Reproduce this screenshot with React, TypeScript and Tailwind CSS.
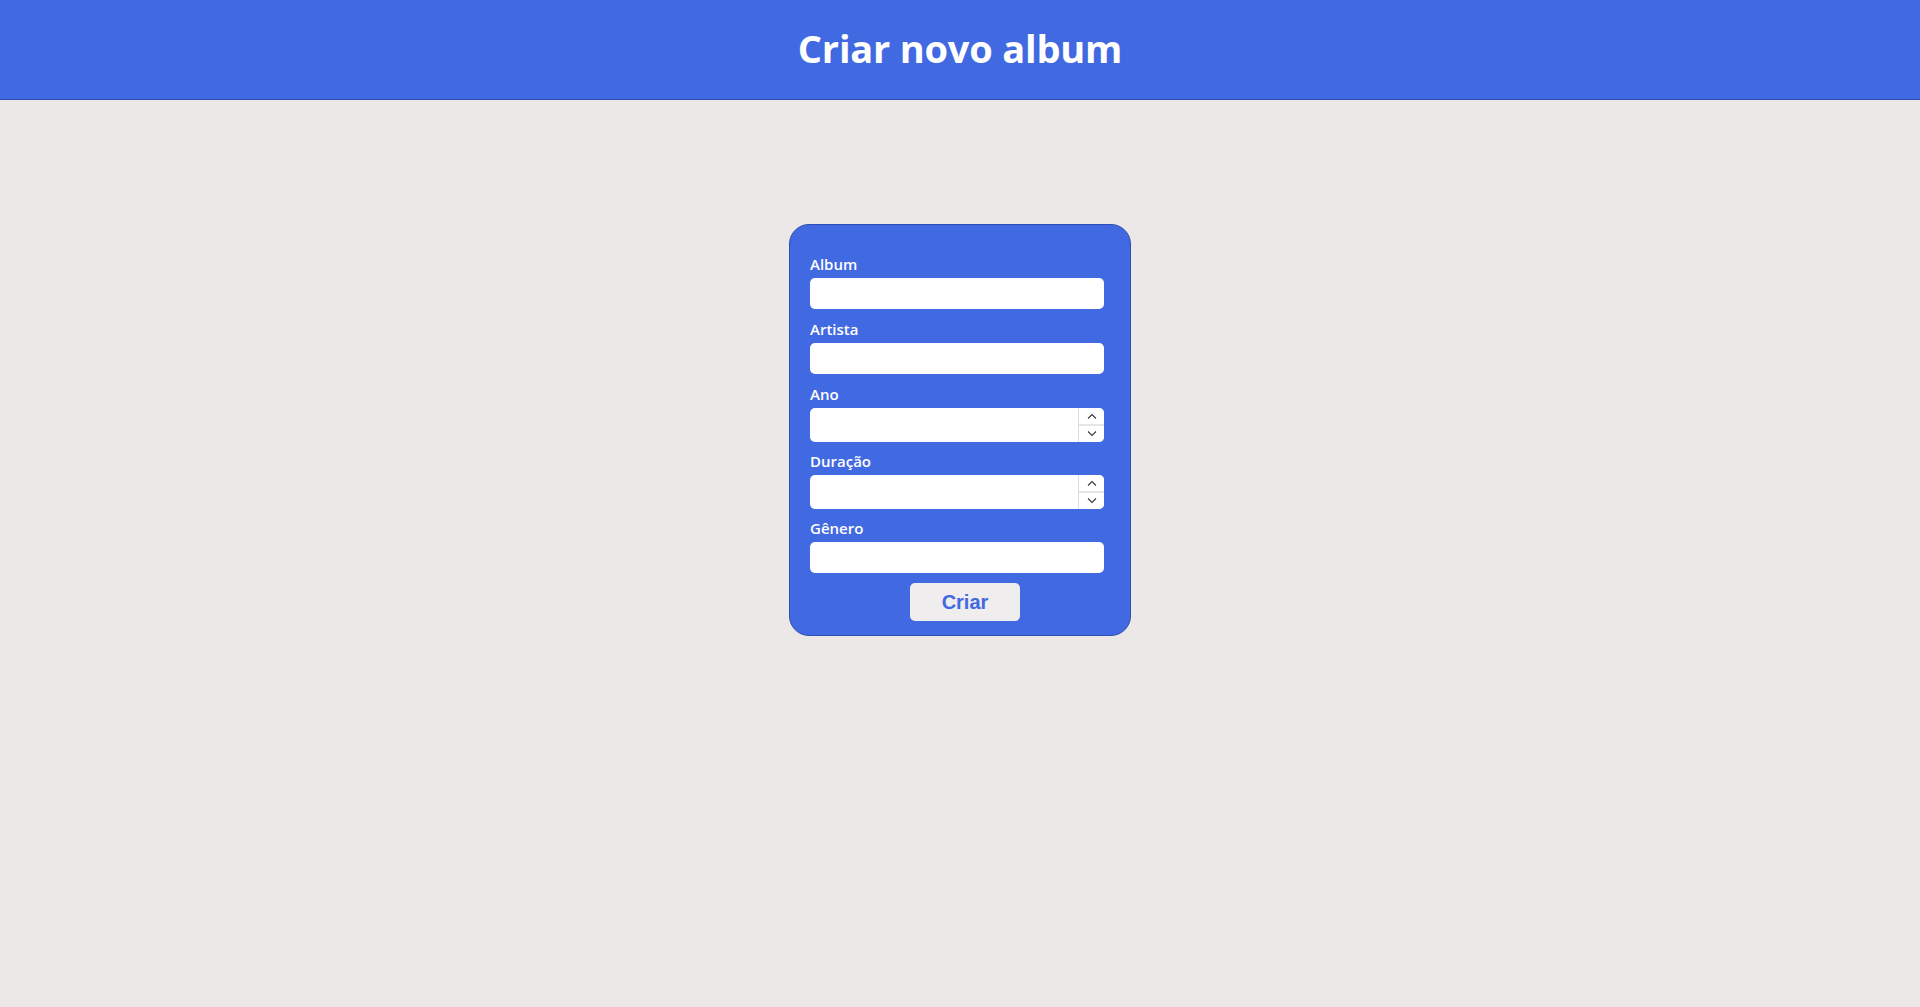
import React, { useState } from 'react';

const Spinner: React.FC = () => (
  <div className="absolute right-0 top-0 bottom-0 w-[26px] border-l border-[#dcdcdc] flex flex-col bg-white rounded-r-[5px]">
    <div className="flex-1 flex items-center justify-center border-b-2 border-[#e6e6e6]">
      <svg width="10" height="6" viewBox="0 0 10 6" fill="none" stroke="#3a3a3a" strokeWidth="1.1">
        <path d="M1 5.5 L5 1.5 L9 5.5" />
      </svg>
    </div>
    <div className="flex-1 flex items-center justify-center">
      <svg width="10" height="6" viewBox="0 0 10 6" fill="none" stroke="#3a3a3a" strokeWidth="1.1">
        <path d="M1 0.5 L5 4.5 L9 0.5" />
      </svg>
    </div>
  </div>
);

interface FieldProps {
  label: string;
  value: string;
  onChange: (v: string) => void;
  numeric?: boolean;
}

const Field: React.FC<FieldProps> = ({ label, value, onChange, numeric }) => (
  <div className={`flex flex-col ${numeric ? 'mb-[8px]' : 'mb-[9px]'}`}>
    <label className="h-6 leading-[22px] text-white text-[15px] font-semibold mb-px">{label}</label>
    <div className={`relative w-[294px] ${numeric ? 'h-[34px]' : 'h-[31px]'}`}>
      <input
        type="text"
        inputMode={numeric ? 'numeric' : undefined}
        value={value}
        onChange={(e) => onChange(e.target.value)}
        className="w-full h-full bg-white rounded-[5px] px-2 text-sm text-slate-900 outline-none"
      />
      {numeric && <Spinner />}
    </div>
  </div>
);

export default function App() {
  const [album, setAlbum] = useState('');
  const [artista, setArtista] = useState('');
  const [ano, setAno] = useState('');
  const [duracao, setDuracao] = useState('');
  const [genero, setGenero] = useState('');

  return (
    <div className="min-h-screen bg-[#ece8e7] font-['Open_Sans',sans-serif]">
      {/* Header */}
      <header className="h-[100px] bg-[#4169e1] border-b border-[#2f4fa8] flex items-center justify-center">
        <h1 className="text-white text-[38px] font-bold tracking-[-0.2px] pb-[2px]">Criar novo album</h1>
      </header>

      {/* Form card */}
      <div className="flex justify-center pt-[124px]">
        <form
          onSubmit={(e) => e.preventDefault()}
          className="w-[342px] bg-[#4169e1] border border-[#2d4fb3] rounded-[20px] pl-5 pt-[28px] pb-[14px] flex flex-col"
        >
          <Field label="Album" value={album} onChange={setAlbum} />
          <Field label="Artista" value={artista} onChange={setArtista} />
          <Field label="Ano" value={ano} onChange={setAno} numeric />
          <Field label="Duração" value={duracao} onChange={setDuracao} numeric />
          <Field label="Gênero" value={genero} onChange={setGenero} />
          <div className="flex justify-center w-[294px] pl-[16px] mt-px">
            <button
              type="submit"
              className="w-[110px] h-[38px] bg-[#efeded] rounded-[5px] text-[#4169e1] text-[20px] font-bold font-['Liberation_Sans',Arial,sans-serif]"
            >
              Criar
            </button>
          </div>
        </form>
      </div>
    </div>
  );
}
